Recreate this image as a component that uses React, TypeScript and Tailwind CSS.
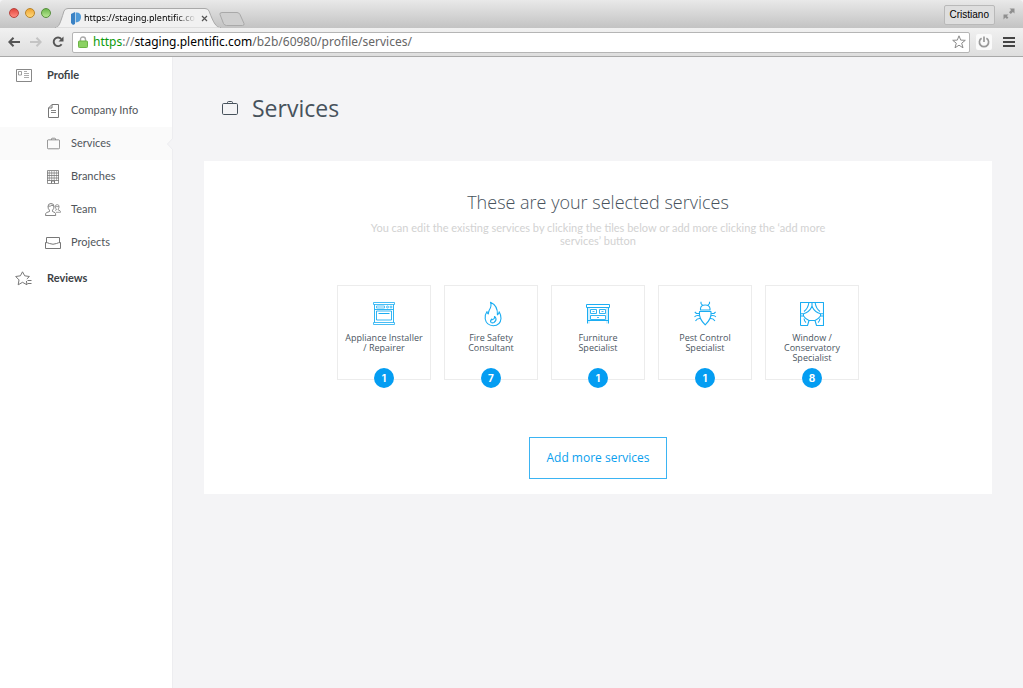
import type { ReactNode } from "react";

const stroke = {
  fill: "none",
  stroke: "currentColor",
  strokeWidth: 1,
  strokeLinejoin: "round" as const,
  "aria-hidden": true,
};

function Briefcase({ className }: { className: string }) {
  return (
    <svg viewBox="0 0 16 16" className={className} {...stroke}>
      <rect x="0.5" y="3.5" width="15" height="11" rx="1.2" />
      <path d="M5.5 3.5V2.6Q5.5 1.5 6.6 1.5H9.4Q10.5 1.5 10.5 2.6V3.5" />
    </svg>
  );
}

function ProfileIcon() {
  return (
    <svg viewBox="0 0 16 13" className="h-[13px] w-4" {...stroke}>
      <rect x="0.5" y="0.5" width="15" height="12" />
      <rect x="2.5" y="2.5" width="3" height="3.5" strokeWidth="0.8" />
      <path d="M8 2.5h3M8 4.5h5M8 6.5h5M8 8.5h5" strokeWidth="0.7" />
    </svg>
  );
}

function DocIcon() {
  return (
    <svg viewBox="0 0 11 14" className="h-[14px] w-[11px]" {...stroke}>
      <path d="M4 0.5H10.5V13.5H0.5V4L4 0.5V4H0.5" />
      <path d="M3 6.5h5M3 8.5h5" strokeWidth="0.9" />
    </svg>
  );
}

function BuildingIcon() {
  return (
    <svg viewBox="0 0 12 14" className="h-[14px] w-3" {...stroke}>
      <path d="M0.5 13.5V0.5H11.5V13.5ZM0 3h12M0 5.5h12M0 8h12M0 10.5h12" strokeWidth="0.8" />
      <path d="M2.3 1v10M4.7 1v10M7.2 1v10M9.6 1v10" strokeWidth="0.6" />
      <path d="M4.5 13.5V11H7.5V13.5" />
    </svg>
  );
}

function TeamIcon() {
  return (
    <svg viewBox="0 0 16 13" className="h-[13px] w-4" {...stroke}>
      <path d="M3 3.5Q3 0.5 6 0.5T9 3.5Q9 6 7.5 7.2V8.5L10 9.6Q10.7 10 10.7 12.5H0.5Q0.5 10 1.5 9.6L4.5 8.5V7.2Q3 6 3 3.5ZM3.2 3.3Q6 3.4 7 2Q8 3.3 8.9 3.3" strokeWidth="0.9" />
      <path d="M10.3 3.6Q10.3 1.6 12.2 1.6T14.1 3.6Q14.1 5.3 13.2 6V7L15 7.7Q15.6 8 15.6 9.3H11M10.3 3.6Q10.3 5.3 11.3 6V7L10.2 7.5M10.5 3.6H14" strokeWidth="0.7" />
    </svg>
  );
}

function ProjectsIcon() {
  return (
    <svg viewBox="0 0 16 12" className="h-3 w-4" {...stroke}>
      <path d="M1.5 6V0.5H14.5V6M0.5 5.5Q2.5 5.5 4.5 6.5Q8 8 11.5 6.5Q13.5 5.5 15.5 5.5V11.5H0.5Z" />
    </svg>
  );
}

function ReviewsIcon() {
  return (
    <svg viewBox="0 0 18 15" className="h-[15px] w-[18px]" {...stroke}>
      <path d="M11.4 10L12 13.8L7.5 11.3L3.2 13.8L4 8.9L0.7 5.5L5.4 4.8L7.5 0.8L9.7 4.8L14.4 5.5L11.8 8" />
      <path d="M12.5 9.5h4M12.5 12.5h4" />
    </svg>
  );
}

const items = [
  { label: "Company Info", icon: <DocIcon />, active: false },
  { label: "Services", icon: <Briefcase className="size-[13px]" />, active: true },
  { label: "Branches", icon: <BuildingIcon />, active: false },
  { label: "Team", icon: <TeamIcon />, active: false },
  { label: "Projects", icon: <ProjectsIcon />, active: false },
];

function OvenIcon() {
  return (
    <svg viewBox="0 0 24 26" className="h-[26px] w-6" {...stroke}>
      <rect x="1.5" y="1.5" width="21" height="2" strokeWidth="0.8" />
      <path d="M2.5 3.5V21.5M21.5 3.5V21.5M2.5 8.5H21.5" strokeWidth="0.9" />
      <rect x="4.5" y="5" width="8" height="2" strokeWidth="0.7" />
      <circle cx="15.5" cy="6" r="1" strokeWidth="0.8" />
      <circle cx="19" cy="6" r="1" strokeWidth="0.8" />
      <rect x="4.5" y="10" width="15" height="9" strokeWidth="0.9" />
      <path d="M6.5 12.5H17.5" />
      <path d="M1.5 21.5H22.5V23.5H1.5Z" strokeWidth="0.8" />
    </svg>
  );
}

function FlameIcon() {
  return (
    <svg viewBox="0 0 24 26" className="ml-1 h-[26px] w-6" {...stroke} strokeWidth={1.1}>
      <path d="M9.5 1.2Q11 5 8.2 9.3Q7.5 11 7.3 13Q6 12.3 6 10.5Q3.5 14 4.2 18Q5.5 24.5 12.2 24.7Q19.5 24.6 20 17.5Q20 14 18.2 10.8Q17.8 13 16.4 13.8Q17 4.5 9.5 1.2Z" />
      <path d="M13.5 15.5Q14 17.6 11.8 18.6Q10.8 19 10.8 18Q8.8 20 10 21.3Q11.2 22.3 13 21.5Q15.8 19.6 14.8 17Q14.5 15.9 13.5 15.5Z" />
    </svg>
  );
}

function FurnitureIcon() {
  return (
    <svg viewBox="0 0 24 26" className="h-[26px] w-6" {...stroke}>
      <rect x="0.5" y="3.5" width="23" height="3" />
      <path d="M1.5 6.5V22.5M22.5 6.5V22.5M1.5 19.5H22.5" />
      <path d="M3 6.5V22.5M21 6.5V22.5" strokeWidth="0.4" />
      <rect x="4.5" y="8.5" width="6" height="4" strokeWidth="0.9" />
      <rect x="13.5" y="8.5" width="6" height="4" strokeWidth="0.9" />
      <rect x="4.5" y="14.5" width="15" height="4" strokeWidth="0.9" />
      <path d="M6.5 10.5h2M15.5 10.5h2M11 16.5h2" strokeWidth="0.8" />
    </svg>
  );
}

function BugIcon() {
  return (
    <svg viewBox="0 0 24 26" className="h-[26px] w-6" {...stroke} strokeWidth={1.1}>
      <path d="M8 0.8V2.5L9.6 4.3M16.5 0.8V2.5L14.9 4.3" />
      <path d="M7.5 9V7.5Q7.8 4 12.2 4T17 7.5V9Z" />
      <path d="M6.5 10.5H18Q19 17.5 12.2 23.8Q5.5 17.5 6.5 10.5Z" />
      <path d="M6.3 12.5H3.5L1.8 11M6.5 14.8Q3 14 1.5 16M7.4 17.5Q4 17 2.5 20M18.1 12.5H20.9L22.6 11M17.9 14.8Q21.4 14 22.9 16M17 17.5Q20.4 17 21.9 20" />
    </svg>
  );
}

function WindowIcon() {
  return (
    <svg viewBox="0 0 24 26" className="h-[26px] w-6" {...stroke} strokeWidth={1.1}>
      <path d="M0.5 24.5V1.5H23.5V24.5H16.5L15 19.5Q18.5 18 20.5 15H23.5M0.5 15H3.5Q5.5 18 9 19.5L7.5 24.5H0.5M8.8 19.5H15.2M12 1.5V6" />
      <path d="M12 5.5Q9 11.5 3.5 12.8H0.5M12 5.5Q15 11.5 20.5 12.8H23.5M8.8 2Q8 7.5 4 10.5M15.2 2Q16 7.5 20 10.5M3.5 12.8V15M20.5 12.8V15M4 17.5Q4.3 20 6 21.5M20 17.5Q19.7 20 18 21.5" />
    </svg>
  );
}

const services: { name: string; count: number; icon: ReactNode }[] = [
  { name: "Appliance Installer / Repairer", count: 1, icon: <OvenIcon /> },
  { name: "Fire Safety Consultant", count: 7, icon: <FlameIcon /> },
  { name: "Furniture Specialist", count: 1, icon: <FurnitureIcon /> },
  { name: "Pest Control Specialist", count: 1, icon: <BugIcon /> },
  { name: "Window / Conservatory Specialist", count: 8, icon: <WindowIcon /> },
];

function BrowserChrome() {
  return (
    <header className="font-['Noto_Sans',sans-serif] text-black">
      <div className="flex h-7 items-end rounded-t bg-linear-to-b from-[#e9e9e9] to-[#c3c3c3] pr-2 pl-[9px]">
        <div className="flex h-[30px] items-center gap-1.5">
          <button aria-label="Close window" className="size-2.5 rounded-full border border-[#b8443e] bg-linear-to-b from-[#e2463f] to-[#ff8a80]" />
          <button aria-label="Minimise window" className="size-2.5 rounded-full border border-[#b98328] bg-linear-to-b from-[#efa52f] to-[#ffd978]" />
          <button aria-label="Zoom window" className="size-2.5 rounded-full border border-[#578f3d] bg-linear-to-b from-[#6cb84b] to-[#b9e893]" />
        </div>
        <div className="relative ml-1 flex h-5 w-[168px] items-center">
          <svg viewBox="0 0 168 20" className="absolute inset-0 h-5 w-[168px]" aria-hidden="true">
            <path d="M0 20C4 19 5 16 9 3Q10 0.5 13 0.5H150Q153 0.5 154 3C159 16 161 19 166 20Z" fill="#f1f1f1" stroke="#a9a9a9" />
            <path d="M1 20H165" stroke="#f1f1f1" />
          </svg>
          <div className="relative flex items-center pl-4">
            <svg viewBox="0 0 10 13" className="h-[13px] w-2.5 shrink-0" aria-hidden="true">
              <path d="M0 2L4 0V12L2 13L0 11Z" fill="#3b82c4" />
              <path d="M4.6 0.5Q10 0 10 5T4.6 10.5Z" fill="#4f9ad8" />
            </svg>
            <span className="ml-[3px] bg-linear-to-r from-black from-80% to-[#e8e8e8] bg-clip-text text-[9px] leading-[14px] whitespace-nowrap text-transparent">
              https://staging.plentific.co
            </span>
            <button aria-label="Close tab" className="ml-1.5 shrink-0 text-[#555]">
              <svg viewBox="0 0 7 7" className="size-[7px]" fill="none" stroke="currentColor" strokeWidth="1.2" aria-hidden="true">
                <path d="M1 1L6 6M6 1L1 6" />
              </svg>
            </button>
          </div>
        </div>
        <button aria-label="New tab" className="-ml-1 mb-0.5">
          <svg viewBox="0 0 26 14" className="h-3.5 w-[26px]" aria-hidden="true">
            <path d="M3 0.5H18Q20 0.5 21 2.5L25 11.5Q25.5 13.5 23.5 13.5H7.5Q5.5 13.5 4.5 11.5L1 2.5Q0.5 0.5 3 0.5Z" fill="#cfcfcf" stroke="#a9a9a9" />
          </svg>
        </button>
        <div className="ml-auto flex h-7 items-center gap-2">
          <button className="mt-0.5 h-5 rounded-xs border border-[#b9b9b9] bg-[#dedede] px-[5px] font-['Liberation_Sans',sans-serif] text-[10px] leading-4">Cristiano</button>
          <button aria-label="Full screen" className="text-[#8f8f8f]">
            <svg viewBox="0 0 12 12" className="size-3" fill="currentColor" aria-hidden="true">
              <path d="M6.5 0.5H11.5V5.5L9.9 3.9L7.8 6L6 4.2L8.1 2.1ZM0.5 6.5H5.5L3.9 8.1L5.4 9.6L4 11L2.4 9.6L0.5 11.5Z" />
            </svg>
          </button>
        </div>
      </div>
      <div className="flex h-[29px] items-center border-b border-[#a9a9a9] bg-linear-to-b from-[#f1f1f1] to-[#dedede] pr-2 pl-2">
        <button aria-label="Back" className="text-[#555]">
          <svg viewBox="0 0 12 10" className="h-2.5 w-3" fill="none" stroke="currentColor" strokeWidth="2" aria-hidden="true"><path d="M1 5H12M5.5 0.7L1.3 5L5.5 9.3" /></svg>
        </button>
        <button aria-label="Forward" className="ml-2.5 text-[#c4c4c4]">
          <svg viewBox="0 0 12 10" className="h-2.5 w-3" fill="none" stroke="currentColor" strokeWidth="2" aria-hidden="true"><path d="M0 5H11M6.5 0.7L10.7 5L6.5 9.3" /></svg>
        </button>
        <button aria-label="Reload" className="ml-2.5 text-[#555]">
          <svg viewBox="0 0 12 12" className="size-3" fill="none" stroke="currentColor" strokeWidth="1.9" aria-hidden="true">
            <path d="M9.6 8.2A4.3 4.3 0 1 1 9.2 3" />
            <path d="M11.5 0.5V5.5H6.5Z" fill="currentColor" stroke="none" />
          </svg>
        </button>
        <div className="ml-2 flex h-[21px] grow items-center rounded-xs border border-[#b5b5b5] bg-white pr-[3px] pl-[5px] text-[12px]">
          <svg viewBox="0 0 10 12" className="h-3 w-2.5 shrink-0" aria-hidden="true">
            <path d="M2.5 6V3.5Q2.5 1 5 1T7.5 3.5V6" fill="none" stroke="#a9a9a9" strokeWidth="1.4" />
            <rect x="0.5" y="5" width="9" height="6.5" rx="0.8" fill="#8bd162" stroke="#6cb445" />
          </svg>
          <label htmlFor="address" className="ml-[5px] leading-4">
            <span className="text-[#0a9a0a]">https</span>
            <span className="text-[#777]">://</span>
            <span>staging.plentific.com</span>
          </label>
          <input id="address" defaultValue="/b2b/60980/profile/services/" className="h-4 min-w-0 grow bg-transparent leading-4 text-[#666] outline-none" />
          <button aria-label="Bookmark this page" className="text-[#8a8a8a]">
            <svg viewBox="0 0 14 14" className="size-3.5" {...stroke}>
              <path d="M7 0.8L8.7 5.1L13.3 5.3L9.7 8.2L11 12.8L7 10.2L3 12.8L4.3 8.2L0.7 5.3L5.3 5.1Z" />
            </svg>
          </button>
        </div>
        <button aria-label="Power extension" className="ml-1.5 flex size-4 items-center justify-center rounded-xs bg-[#fafafa] text-[#999]">
          <svg viewBox="0 0 12 12" className="size-3" fill="none" stroke="currentColor" strokeWidth="1.7" aria-hidden="true">
            <path d="M3.6 2.2A4.6 4.6 0 1 0 8.4 2.2M6 0.5V6" />
          </svg>
        </button>
        <button aria-label="Menu" className="ml-[11px] text-[#444]">
          <svg viewBox="0 0 12 10" className="h-2.5 w-3" stroke="currentColor" strokeWidth="2" aria-hidden="true"><path d="M0 1H12M0 5H12M0 9H12" /></svg>
        </button>
      </div>
    </header>
  );
}

function Sidebar() {
  return (
    <nav aria-label="Main" className="w-[173px] shrink-0 border-r border-[#ededf0] bg-white text-[11px] text-[#50555a]">
      <a href="#profile" className="flex h-[37px] items-center font-bold text-[#3c4145]">
        <span className="flex w-[47px] pl-4 text-[#888]"><ProfileIcon /></span>
        Profile
      </a>
      <ul>
        {items.map((item) => (
          <li key={item.label} className={item.active ? "relative bg-[#fafafa]" : "relative"}>
            <a href={"#" + item.label} className="flex h-[33px] items-center pl-[44px]">
              <span className="mr-[9px] flex w-[18px] justify-center text-[#777]">{item.icon}</span>
              {item.label}
            </a>
            {item.active && (
              <svg viewBox="0 0 6 12" className="absolute top-[11px] -right-px h-3 w-1.5" aria-hidden="true">
                <path d="M6 0L0 6L6 12Z" fill="#f4f4f6" />
                <path d="M6 0L0.5 6L6 12" fill="none" stroke="#ededf0" />
              </svg>
            )}
          </li>
        ))}
      </ul>
      <a href="#reviews" className="flex h-[39px] items-center font-bold text-[#3c4145]">
        <span className="flex w-[47px] pl-[15px] text-[#777]"><ReviewsIcon /></span>
        Reviews
      </a>
    </nav>
  );
}

export default function App() {
  return (
    <div className="flex min-h-screen flex-col bg-[#f4f4f6] font-['Lato',sans-serif]">
      <BrowserChrome />
      <div className="flex grow">
        <Sidebar />
        <main className="min-w-0 grow px-[31px] pt-[31px] pb-8">
          <h1 className="flex h-10 items-center pl-[18px] font-['Open_Sans',sans-serif] text-[23px] leading-7 text-[#47525c]">
            <Briefcase className="mr-3.5 size-4" />
            Services
          </h1>
          <section className="mt-[33px] flex flex-col items-center bg-white px-6 pt-7 pb-[15px]">
            <h2 className="font-['Open_Sans',sans-serif] text-[18px] leading-[26px] font-light text-[#47525c]">These are your selected services</h2>
            <p className="mt-1.5 max-w-[480px] text-center text-[11px] leading-[13px] text-[#d2d2d2]">
              You can edit the existing services by clicking the tiles below or add more clicking the ‘add more services’ button
            </p>
            <ul className="mt-[38px] flex flex-wrap justify-center gap-[13px]">
              {services.map((s) => (
                <li key={s.name}>
                  <button className="relative flex h-[95px] w-[94px] flex-col items-center border border-[#ececec] px-1.5 pt-[15px] text-[#4b565f]">
                    <span className="text-[#1badf2]">{s.icon}</span>
                    <span className="mt-1.5 font-['Open_Sans',sans-serif] text-[9px] leading-[10px]">{s.name}</span>
                    <span className="absolute -bottom-[9px] flex size-5 items-center justify-center rounded-full bg-[#049df2] font-['Inter',sans-serif] text-[10px] font-bold text-white">
                      {s.count}
                    </span>
                  </button>
                </li>
              ))}
            </ul>
            <button className="mt-[57px] h-[42px] border border-[#3bb4f3] px-4 font-['Open_Sans',sans-serif] text-[12px] text-[#0b9fee]">Add more services</button>
          </section>
        </main>
      </div>
    </div>
  );
}
